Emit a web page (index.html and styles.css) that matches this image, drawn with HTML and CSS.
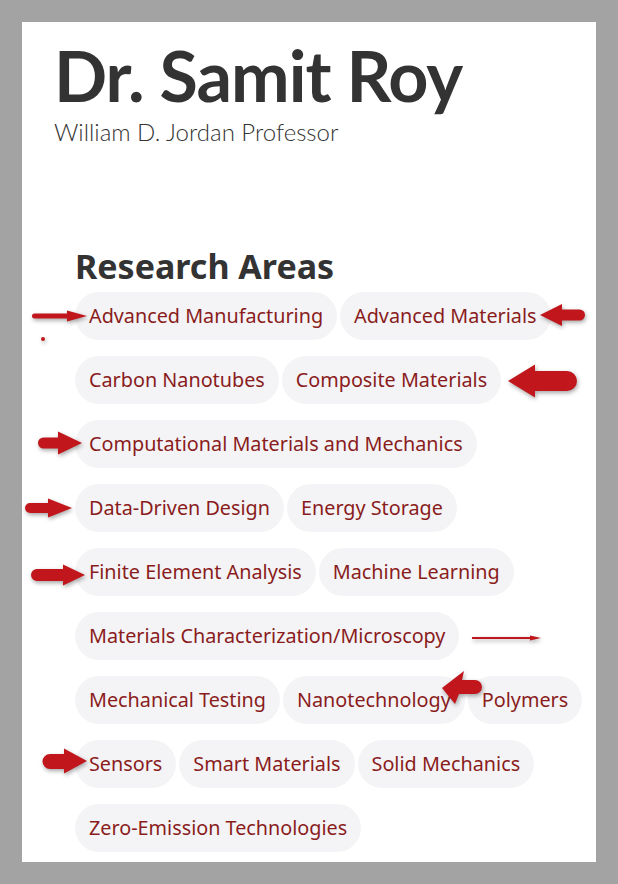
FILE: index.html
```html
<!DOCTYPE html>
<html lang="en">
<head>
  <meta charset="UTF-8">
  <meta name="viewport" content="width=device-width, initial-scale=1.0">
  <title>Dr. Samit Roy</title>
  <link rel="stylesheet" href="styles.css">
</head>
<body>
  <div class="page">
    <h1 class="name">Dr. Samit Roy</h1>
    <p class="title">William D. Jordan Professor</p>

    <div class="research">
      <h2>Research Areas</h2>
      <ul class="tags">
        <li>Advanced Manufacturing</li>
        <li>Advanced Materials</li>
        <li>Carbon Nanotubes</li>
        <li>Composite Materials</li>
        <li>Computational Materials and Mechanics</li>
        <li>Data-Driven Design</li>
        <li>Energy Storage</li>
        <li>Finite Element Analysis</li>
        <li>Machine Learning</li>
        <li>Materials Characterization/Microscopy</li>
        <li>Mechanical Testing</li>
        <li>Nanotechnology</li>
        <li>Polymers</li>
        <li>Sensors</li>
        <li>Smart Materials</li>
        <li>Solid Mechanics</li>
        <li>Zero-Emission Technologies</li>
      </ul>
    </div>
  </div>

  <!-- red markup arrows drawn over the screenshot -->
  <svg class="marks" width="618" height="884" viewBox="0 0 618 884">
    <path d="M34.5,313.5 H67 V310.5 L87,316 L67,321.5 V318.5 H34.5 A2.5,2.5 0 0 1 34.5,313.5 Z"/>
    <circle cx="43" cy="339" r="2"/>
    <path d="M579.5,309.5 H562 V304 L540,315 L562,326 V320.5 H579.5 A5.5,5.5 0 0 0 579.5,309.5 Z"/>
    <path d="M567,371 H535 V364.5 L508,381 L535,397.5 V391 H567 A10,10 0 0 0 567,371 Z"/>
    <path d="M43.5,437.5 H58 V431.5 L82,443 L58,454.5 V448.5 H43.5 A5.5,5.5 0 0 1 43.5,437.5 Z"/>
    <path d="M30,503 H48 V498.5 L72,508 L48,517.5 V513 H30 A5,5 0 0 1 30,503 Z"/>
    <path d="M37,569 H63 V564.5 L85,575 L63,585.5 V581 H37 A6,6 0 0 1 37,569 Z"/>
    <path d="M472,637 H530 V635.5 L541,638 L530,640.5 V639 H472 Z"/>
    <path d="M475,680 H462 L464,671 L442,688 L455,704 L459,694 H475 A7,7 0 0 0 475,680 Z"/>
    <path d="M50,754 H64 V748.5 L87,761 L64,773.5 V769 H50 A7.5,7.5 0 0 1 50,754 Z"/>
  </svg>
</body>
</html>
```

FILE: styles.css
```css
body {
  margin: 0;
  padding: 22px;
  background-color: #a3a3a3;
  position: relative;
  font-family: "Noto Sans", sans-serif;
}

.page {
  height: 840px;
  box-sizing: border-box;
  background-color: #fff;
  padding: 18px 6px 0 32px;
}

.name {
  margin: 0;
  font-family: Lato, sans-serif;
  font-size: 70px;
  font-weight: 700;
  line-height: 70px;
  color: #333;
  letter-spacing: -1px;
}

.title {
  margin: 8px 0 0;
  font-family: Lato, sans-serif;
  font-size: 24px;
  font-weight: 300;
  line-height: 28px;
  color: #333;
}

.research {
  margin-top: 100px;
  padding-left: 21px;
}

.research h2 {
  margin: 0 0 6px;
  font-size: 34px;
  font-weight: 700;
  line-height: 40px;
  color: #333;
}

.tags {
  list-style: none;
  margin: 0;
  padding: 0;
  display: flex;
  flex-wrap: wrap;
  gap: 16px 3px;
}

.tags li {
  background-color: #f4f4f6;
  color: #8a1c1c;
  font-size: 19.8px;
  line-height: 28px;
  padding: 10px 14px;
  border-radius: 24px;
}

.marks {
  position: absolute;
  top: 0;
  left: 0;
  pointer-events: none;
  fill: #c0161c;
  filter: drop-shadow(1px 2px 2px rgba(0, 0, 0, 0.35));
}
```
